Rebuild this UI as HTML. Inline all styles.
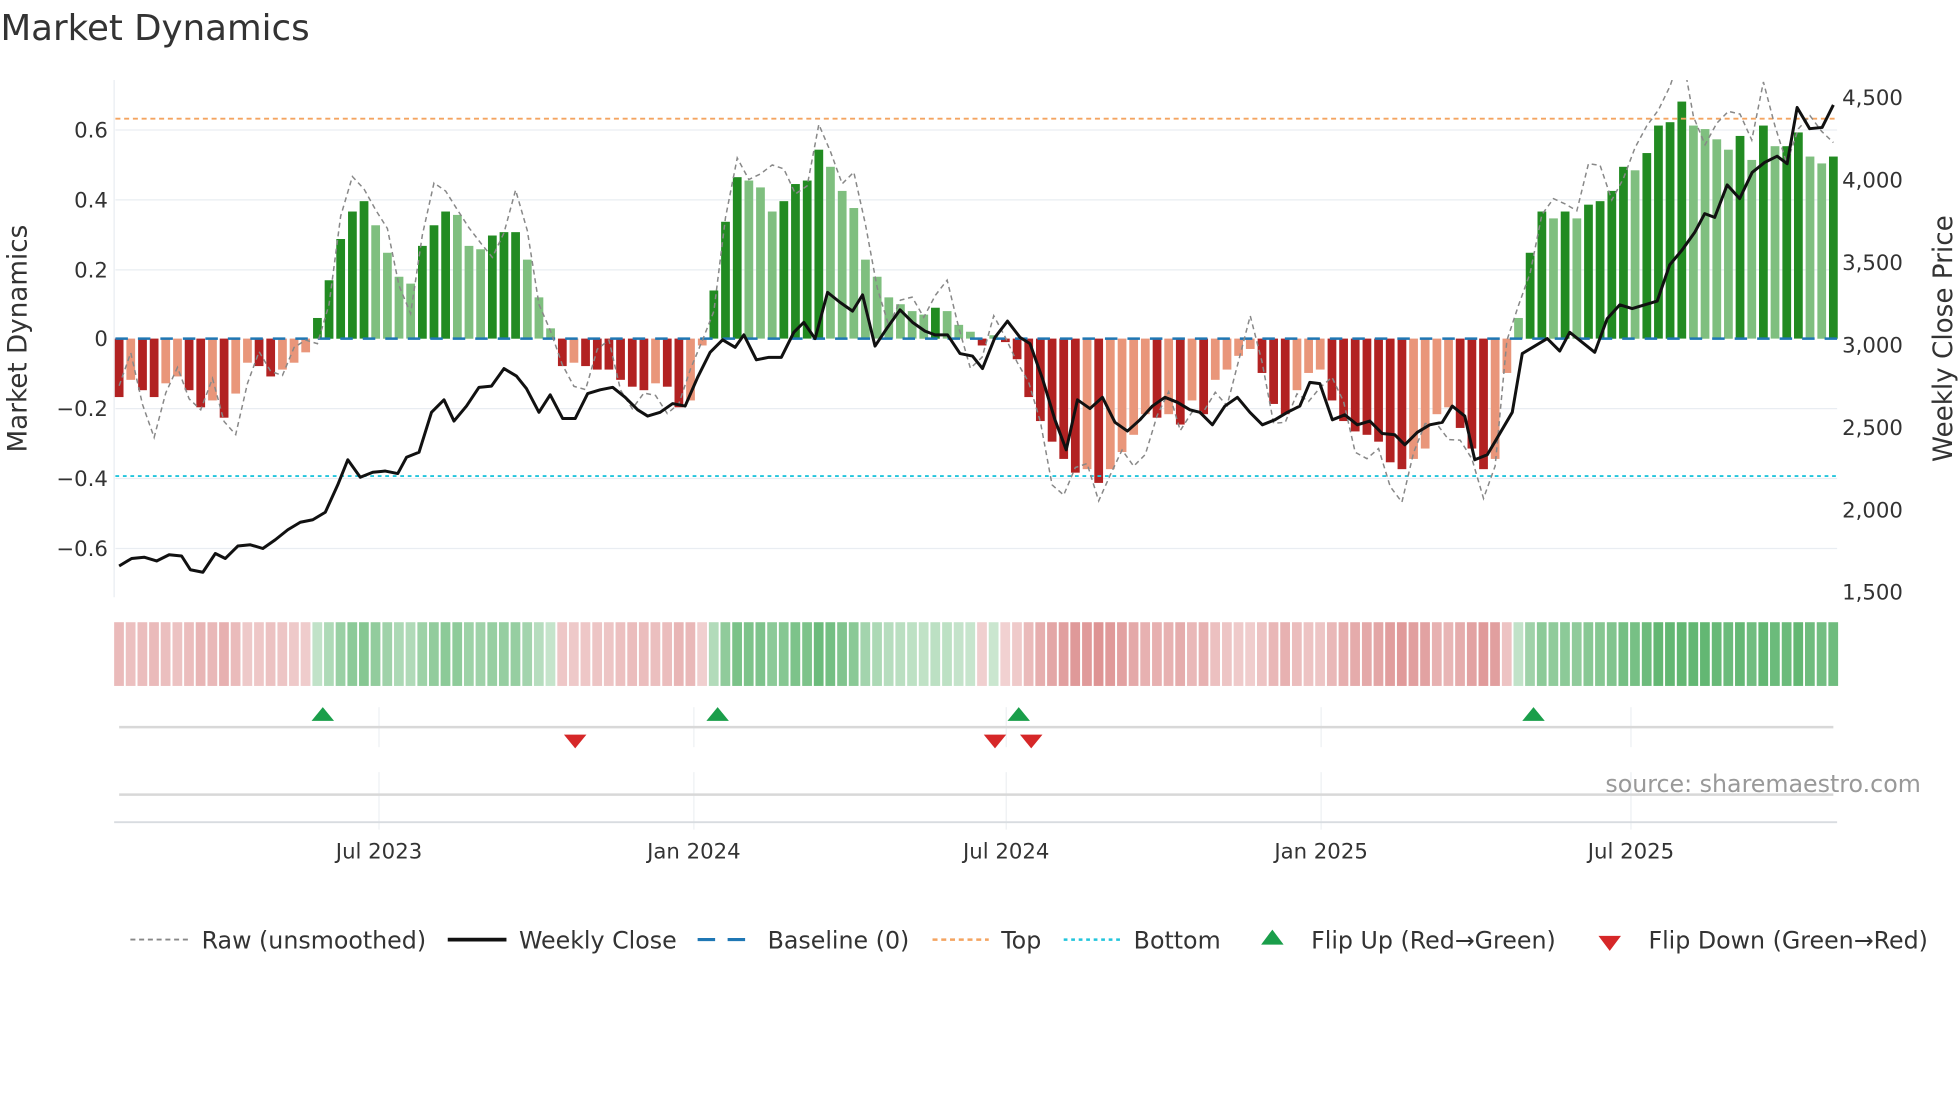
<!DOCTYPE html>
<html><head><meta charset="utf-8"><style>html,body{margin:0;padding:0;background:#fff}svg{display:block}text{font-family:"DejaVu Sans","Liberation Sans",sans-serif}</style></head>
<body>
<svg id="s" width="1960" height="1102" viewBox="0 0 1568 882" xmlns="http://www.w3.org/2000/svg">
<defs><clipPath id="pc"><rect x="92" y="64" width="1378" height="420"/></clipPath></defs>
<rect width="1568" height="882" fill="#fff"/>
<text x="0" y="32" font-size="28.5" fill="#333">Market Dynamics</text>
<g stroke="#e9edf2" stroke-width="1">
<line x1="92" y1="104" x2="1470" y2="104"/><line x1="92" y1="160" x2="1470" y2="160"/><line x1="92" y1="216" x2="1470" y2="216"/><line x1="92" y1="327" x2="1470" y2="327"/><line x1="92" y1="383" x2="1470" y2="383"/><line x1="92" y1="439" x2="1470" y2="439"/>
<line x1="91" y1="64" x2="91" y2="478"/>
</g>
<g font-size="17" fill="#333" text-anchor="end">
<text x="86" y="110">0.6</text><text x="86" y="166">0.4</text><text x="86" y="222">0.2</text><text x="86" y="277">0</text><text x="86" y="333">−0.2</text><text x="86" y="389">−0.4</text><text x="86" y="445">−0.6</text>
</g>
<g font-size="17" fill="#333">
<text x="1474" y="84">4,500</text><text x="1474" y="150">4,000</text><text x="1474" y="216">3,500</text><text x="1474" y="282">3,000</text><text x="1474" y="348">2,500</text><text x="1474" y="414">2,000</text><text x="1474" y="480">1,500</text>
</g>
<text transform="translate(21,271) rotate(-90)" font-size="21" fill="#333" text-anchor="middle">Market Dynamics</text>
<text transform="translate(1562,271) rotate(-90)" font-size="21" fill="#333" text-anchor="middle">Weekly Close Price</text>
<g id="bars"></g>
<g id="heat"></g>
<line x1="92" y1="95" x2="1470" y2="95" stroke="#f4a460" stroke-width="1.5" stroke-dasharray="4,3"/>
<line x1="92" y1="381" x2="1470" y2="381" stroke="#22c5dc" stroke-width="1.5" stroke-dasharray="3,3"/>
<line x1="92" y1="271" x2="1470" y2="271" stroke="#1f77b4" stroke-width="2" stroke-dasharray="10,8"/>
<polyline id="raw" clip-path="url(#pc)" fill="none" stroke="#888" stroke-width="1.2" stroke-dasharray="4,3"/>
<polyline id="close" fill="none" stroke="#111" stroke-width="2.4" stroke-linejoin="round" points="95,453 105,447 115,446 125,449 135,444 145,445 152,456 162,458 172,443 180,447 190,437 200,436 210,439 220,432 230,424 240,418 250,416 260,410 270,388 278,368 288,382 298,378 308,377 318,379 325,366 335,362 345,330 355,320 363,337 373,325 383,310 393,309 403,295 413,301 421,311 431,330 440,316 450,335 460,335 470,315 480,312 490,310 500,318 510,328 518,333 528,330 538,323 548,325 558,302 568,282 578,272 588,278 595,268 605,288 615,286 625,286 635,266 643,258 652,271 662,234 672,242 682,249 690,236 700,277 710,262 720,248 730,258 740,265 748,268 758,268 768,283 778,285 786,295 796,270 806,257 816,270 824,275 834,303 844,336 853,360 862,320 872,327 882,318 892,338 902,345 912,336 922,325 932,318 942,322 952,328 960,330 970,340 980,325 990,318 1000,330 1010,340 1020,336 1030,330 1040,325 1048,306 1056,307 1066,336 1076,332 1086,340 1096,337 1106,347 1116,348 1124,356 1134,346 1144,340 1154,338 1162,325 1172,333 1180,368 1190,364 1200,347 1210,330 1218,283 1228,277 1238,271 1248,281 1256,266 1266,274 1276,282 1286,255 1296,244 1306,247 1316,244 1326,241 1336,212 1346,200 1356,186 1364,171 1372,174 1382,148 1392,159 1402,138 1412,130 1422,125 1430,131 1438,86 1448,103 1458,102 1467,84"/>
<g stroke="#edf0f3"><line x1="303" y1="566" x2="303" y2="598"/><line x1="555" y1="566" x2="555" y2="598"/><line x1="805" y1="566" x2="805" y2="598"/><line x1="1057" y1="566" x2="1057" y2="598"/><line x1="1305" y1="566" x2="1305" y2="598"/>
<line x1="303" y1="618" x2="303" y2="664"/><line x1="555" y1="618" x2="555" y2="664"/><line x1="805" y1="618" x2="805" y2="664"/><line x1="1057" y1="618" x2="1057" y2="664"/><line x1="1305" y1="618" x2="1305" y2="664"/></g>
<line x1="95" y1="582" x2="1467" y2="582" stroke="#d8d8d8" stroke-width="2"/>
<line x1="95" y1="636" x2="1467" y2="636" stroke="#d8d8d8" stroke-width="2"/>
<line x1="91" y1="658" x2="1470" y2="658" stroke="#d8dce0" stroke-width="1.5"/>
<g fill="#1a9e4a"><path d="M258,566 l9,11 h-18z"/><path d="M574,566 l9,11 h-18z"/><path d="M815,566 l9,11 h-18z"/><path d="M1227,566 l9,11 h-18z"/></g>
<g fill="#d62728"><path d="M460,599 l9,-11 h-18z"/><path d="M796,599 l9,-11 h-18z"/><path d="M825,599 l9,-11 h-18z"/></g>
<text x="1537" y="634" font-size="19" fill="#999" text-anchor="end">source: sharemaestro.com</text>
<g font-size="17" fill="#333" text-anchor="middle"><text x="303" y="687">Jul 2023</text><text x="555" y="687">Jan 2024</text><text x="805" y="687">Jul 2024</text><text x="1057" y="687">Jan 2025</text><text x="1305" y="687">Jul 2025</text></g>
<g font-size="19" fill="#333">
<line x1="104" y1="752" x2="150" y2="752" stroke="#888" stroke-width="1.5" stroke-dasharray="4,3"/><text x="161" y="759">Raw (unsmoothed)</text>
<line x1="358" y1="752" x2="405" y2="752" stroke="#111" stroke-width="3"/><text x="415" y="759">Weekly Close</text>
<line x1="558" y1="752" x2="604" y2="752" stroke="#1f77b4" stroke-width="2.5" stroke-dasharray="14,10"/><text x="614" y="759">Baseline (0)</text>
<line x1="746" y1="752" x2="791" y2="752" stroke="#f4a460" stroke-width="2" stroke-dasharray="4,3"/><text x="801" y="759">Top</text>
<line x1="851" y1="752" x2="897" y2="752" stroke="#22c5dc" stroke-width="2" stroke-dasharray="3,3"/><text x="907" y="759">Bottom</text>
<path d="M1018,744 l9,12 h-18z" fill="#1a9e4a"/><text x="1049" y="759">Flip Up (Red→Green)</text>
<path d="M1288,761 l9,-12 h-18z" fill="#d62728"/><text x="1319" y="759">Flip Down (Green→Red)</text>
</g>
</svg>
<script>
var v=[-0.17,-0.12,-0.15,-0.17,-0.13,-0.11,-0.15,-0.2,-0.18,-0.23,-0.16,-0.07,-0.08,-0.11,-0.09,-0.07,-0.04,
0.06,0.17,0.29,0.37,0.40,0.33,0.25,0.18,0.16,0.27,0.33,0.37,0.36,0.27,0.26,0.30,0.31,0.31,0.23,0.12,0.03,
-0.08,-0.07,-0.08,-0.09,-0.09,-0.12,-0.14,-0.15,-0.13,-0.14,-0.20,-0.18,-0.02,
0.14,0.34,0.47,0.46,0.44,0.37,0.40,0.45,0.46,0.55,0.50,0.43,0.38,0.23,0.18,0.12,0.10,0.08,0.07,0.09,0.08,0.04,0.02,-0.02,
0.01,-0.01,-0.06,-0.17,-0.24,-0.30,-0.35,-0.39,-0.38,-0.42,-0.38,-0.33,-0.28,-0.22,-0.23,-0.22,-0.25,-0.18,-0.22,-0.12,-0.09,-0.05,-0.03,
-0.10,-0.19,-0.22,-0.15,-0.10,-0.09,-0.18,-0.24,-0.27,-0.28,-0.30,-0.36,-0.38,-0.35,-0.32,-0.22,-0.20,-0.26,-0.32,-0.38,-0.35,-0.10,
0.06,0.25,0.37,0.35,0.37,0.35,0.39,0.40,0.43,0.50,0.49,0.54,0.62,0.63,0.69,0.62,0.61,0.58,0.55,0.59,0.52,0.62,0.56,0.56,0.60,0.53,0.51,0.53];
var n=v.length,x0=95,x1=1467,dx=(x1-x0)/(n-1),b='',h='',rp=[];
for(var i=0;i<n;i++){var x=x0+i*dx,a=v[i],p=i?v[i-1]:0,dark=Math.abs(a)>=Math.abs(p);
var c=a>=0?(dark?'#228b22':'#7fbf7f'):(dark?'#b22222':'#e9967a');
var y=271-a*275;b+='<rect x="'+(x-3.5).toFixed(1)+'" y="'+Math.min(y,271).toFixed(1)+'" width="7" height="'+Math.abs(271-y).toFixed(1)+'" fill="'+c+'"/>';
var op=(0.3+Math.min(Math.abs(a),0.6));
h+='<rect x="'+(x-4).toFixed(1)+'" y="498" width="'+(dx-1.5).toFixed(1)+'" height="51" fill="'+(a>=0?'#3fa653':'#cc5a5a')+'" fill-opacity="'+Math.min(op*0.9,0.95).toFixed(2)+'"/>';
var r=a*1.1+Math.sin(i*1.7)*0.06+Math.cos(i*0.9)*0.05;rp.push(x.toFixed(1)+','+(271-r*275).toFixed(1));}
document.getElementById('bars').innerHTML=b;document.getElementById('heat').innerHTML=h;
document.getElementById('raw').setAttribute('points',rp.join(' '));
</script>
</body></html>
